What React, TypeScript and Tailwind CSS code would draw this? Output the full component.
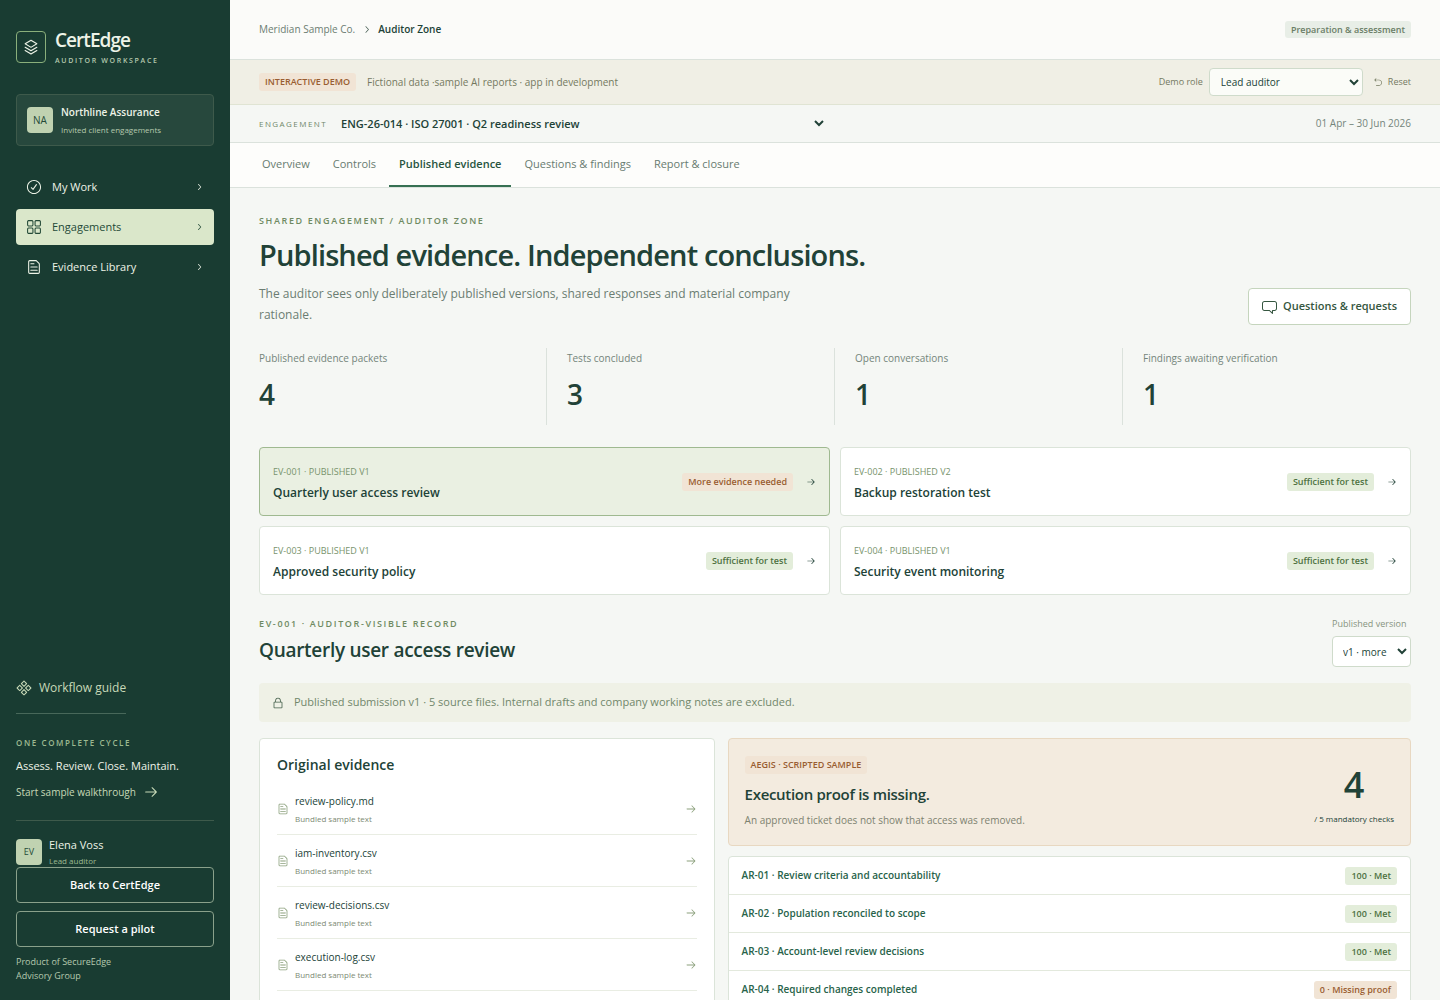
import {
  RxArrowRight,
  RxChatBubble,
  RxCheckCircled,
  RxChevronRight,
  RxComponent1,
  RxDashboard,
  RxFileText,
  RxLayers,
  RxLockClosed,
  RxReset,
} from "react-icons/rx";

const navItems = [
  { label: "My Work", icon: RxCheckCircled, active: false },
  { label: "Engagements", icon: RxDashboard, active: true },
  { label: "Evidence Library", icon: RxFileText, active: false },
];

const tabs = ["Overview", "Controls", "Published evidence", "Questions & findings", "Report & closure"];

const stats = [
  { label: "Published evidence packets", value: 4 },
  { label: "Tests concluded", value: 3 },
  { label: "Open conversations", value: 1 },
  { label: "Findings awaiting verification", value: 1 },
];

const packets = [
  { id: "EV-001", version: "V1", title: "Quarterly user access review", status: "More evidence needed", ok: false },
  { id: "EV-002", version: "V2", title: "Backup restoration test", status: "Sufficient for test", ok: true },
  { id: "EV-003", version: "V1", title: "Approved security policy", status: "Sufficient for test", ok: true },
  { id: "EV-004", version: "V1", title: "Security event monitoring", status: "Sufficient for test", ok: true },
];

const files = ["review-policy.md", "iam-inventory.csv", "review-decisions.csv", "execution-log.csv"];

const checks = [
  { label: "AR-01 · Review criteria and accountability", status: "100 · Met", ok: true },
  { label: "AR-02 · Population reconciled to scope", status: "100 · Met", ok: true },
  { label: "AR-03 · Account-level review decisions", status: "100 · Met", ok: true },
  { label: "AR-04 · Required changes completed", status: "0 · Missing proof", ok: false },
];

function Badge({ ok, children }: { ok: boolean; children: React.ReactNode }) {
  return (
    <span
      className={`inline-block shrink-0 whitespace-nowrap rounded-[3px] px-1.5 text-[9px] leading-[18px] font-semibold ${
        ok ? "bg-[#e3edda] text-[#4d713f]" : "bg-[#f1e4d5] text-[#995d31]"
      }`}
    >
      {children}
    </span>
  );
}

function Sidebar() {
  return (
    <aside className="sticky top-0 h-screen w-[230px] shrink-0 flex flex-col bg-[#193c32] px-4 pt-7 pb-[17px] text-[#edf3e7]">
      {/* Brand */}
      <div className="flex items-center gap-[9px]">
        <div className="flex h-8 w-[30px] items-center justify-center rounded border border-[#8aaf7b]">
          <RxLayers className="h-4 w-4" />
        </div>
        <div>
          <div className="text-[19px] leading-6 font-semibold tracking-[-0.05em]">CertEdge</div>
          <div className="mt-1 text-[7px] leading-[10px] font-semibold tracking-[0.24em] text-[#b5c9ae]">AUDITOR WORKSPACE</div>
        </div>
      </div>

      {/* Workspace */}
      <div className="mt-7 flex h-[52px] shrink-0 items-center gap-2 rounded border border-[#3e5a4b] bg-[#27483d] px-2.5">
        <div className="flex h-[26px] w-[26px] items-center justify-center rounded bg-[#c0d2b1] text-[10px] text-[#244a38]">NA</div>
        <div>
          <div className="text-[10px] leading-4 font-semibold">Northline Assurance</div>
          <div className="mt-1 text-[8px] leading-3 text-[#b5c9ae]">Invited client engagements</div>
        </div>
      </div>

      <nav className="mt-[23px] flex flex-col gap-1">
        {navItems.map(({ label, icon: Icon, active }) => (
          <a
            key={label}
            href="#"
            className={`flex h-9 items-center gap-2.5 rounded px-2.5 text-[11px] ${
              active ? "bg-[#dae7ca] text-[#244a38]" : "font-medium text-[#edf3e7]"
            }`}
          >
            <Icon className="h-4 w-4" />
            <span className="flex-1">{label}</span>
            <RxChevronRight className="h-[10px] w-[10px]" />
          </a>
        ))}
      </nav>

      <div className="mt-auto">
        <a href="#" className="inline-flex items-center gap-[7px] border-b border-[#48685a] pb-[17px] text-xs text-[#c7d9b7]">
          <RxComponent1 className="h-4 w-4" />
          Workflow guide
        </a>
        <div className="mt-[23px] text-[8px] leading-3 font-semibold tracking-[0.2em] text-[#9db991]">ONE COMPLETE CYCLE</div>
        <div className="mt-[9px] text-[11px] leading-4">Assess. Review. Close. Maintain.</div>
        <a href="#" className="mt-2.5 flex items-center gap-[7px] text-[10px] leading-4 text-[#c7d9b7]">
          Start sample walkthrough
          <RxArrowRight className="h-4 w-4" />
        </a>
      </div>

      {/* Signed-in user */}
      <div className="mt-5 flex items-center gap-[7px] border-t border-[#3e5a4b] pt-4">
        <div className="flex h-[26px] w-[26px] items-center justify-center rounded bg-[#c0d2b1] text-[9px] text-[#244a38]">EV</div>
        <div>
          <div className="text-[11px] leading-4">Elena Voss</div>
          <div className="mt-0.5 text-[8px] leading-3 text-[#9db991]">Lead auditor</div>
        </div>
      </div>
      <a href="#" className="flex h-9 shrink-0 items-center justify-center rounded border border-[#8aa18b] text-[11px] font-semibold text-white">
        Back to CertEdge
      </a>
      <a href="#" className="mt-2 flex h-9 shrink-0 items-center justify-center rounded border border-[#8aa18b] text-[11px] font-semibold text-white">
        Request a pilot
      </a>
      <p className="mt-2 text-[9px] leading-[14px] text-[#b5c9ae]">
        Product of SecureEdge
        <br />
        Advisory Group
      </p>
    </aside>
  );
}

function TopBars() {
  return (
    <>
      <header className="flex h-[60px] items-center justify-between border-b border-[#dbe2dc] bg-[#fbfbf9] px-[29px] text-[10px]">
        <div className="flex items-center gap-1.5">
          <a href="#" className="text-[#6b7d72]">Meridian Sample Co.</a>
          <RxChevronRight className="h-[11px] w-[11px] text-[#4a6156]" />
          <span className="font-semibold text-[#214237]">Auditor Zone</span>
        </div>
        <span className="rounded-[3px] bg-[#e8eee7] px-1.5 text-[9px] leading-[17px] font-semibold text-[#6a7d66]">Preparation &amp; assessment</span>
      </header>

      {/* Demo notice */}
      <div className="flex h-[45px] items-center border-b border-[#e0e4d3] bg-[#f0efe5] px-[29px] text-[10px] text-[#74795f]">
        <Badge ok={false}>INTERACTIVE DEMO</Badge>
        <span className="ml-[11px] flex-1">Fictional data ·sample AI reports · app in development</span>
        <label htmlFor="role" className="text-[9px]">Demo role</label>
        <select id="role" className="ml-1.5 h-7 w-[154px] rounded border border-[#cfdbcb] bg-[#fbfcf8] pl-[7px] text-[10px] text-[#214237]">
          <option>Lead auditor</option>
        </select>
        <button className="ml-2.5 flex items-center gap-[5px] text-[9px]">
          <RxReset className="h-2.5 w-2.5" />
          Reset
        </button>
      </div>

      <div className="flex h-[38px] items-center border-b border-[#dbe2dc] px-[29px]">
        <label htmlFor="engagement" className="text-[8px] tracking-[0.18em] text-[#71876b]">ENGAGEMENT</label>
        <select id="engagement" className="ml-2.5 w-[490px] bg-transparent text-[11px] font-semibold text-[#214237]">
          <option>ENG-26-014 · ISO 27001 · Q2 readiness review</option>
        </select>
        <span className="ml-auto text-[10px] text-[#74857b]">01 Apr – 30 Jun 2026</span>
      </div>

      <nav className="flex h-[45px] items-stretch gap-[3px] border-b border-[#dbe2dc] bg-[#fdfdfb] px-[22px] text-[11px]">
        {tabs.map((tab, i) => (
          <a
            key={tab}
            href="#"
            className={`flex items-center border-b-2 px-2.5 ${
              i === 2 ? "border-[#367052] font-semibold text-[#28543f]" : "border-transparent text-[#687b70]"
            }`}
          >
            {tab}
          </a>
        ))}
      </nav>
    </>
  );
}

function EvidenceFiles() {
  return (
    <section className="min-w-0 rounded border border-[#dbe4d9] bg-white px-[17px] pt-4 pb-8">
      <h3 className="text-sm leading-5 font-semibold">Original evidence</h3>
      <ul className="mt-2">
        {files.map((file) => (
          <li key={file} className="border-b border-[#e9ede3]">
            <a href="#" className="flex h-[51px] items-center gap-1.5">
              <RxFileText className="h-3 w-3 text-[#8ba07c]" />
              <span className="flex-1">
                <span className="block text-[10px] leading-4">{file}</span>
                <span className="mt-1 block text-[8px] leading-3 text-[#7c8a74]">Bundled sample text</span>
              </span>
              <RxArrowRight className="h-3 w-3 text-[#8ba07c]" />
            </a>
          </li>
        ))}
      </ul>
    </section>
  );
}

function Assessment() {
  return (
    <div className="flex min-w-0 flex-col gap-2.5">
      <section className="flex h-[108px] shrink-0 items-center justify-between rounded border border-[#e8d8c1] bg-[#f3ebdf] px-4">
        <div className="flex flex-col items-start">
          <Badge ok={false}>AEGIS · SCRIPTED SAMPLE</Badge>
          <h3 className="mt-2.5 text-[15px] leading-5 font-semibold tracking-[-0.02em]">Execution proof is missing.</h3>
          <p className="mt-2 text-[10px] leading-4 text-[#7d8270]">An approved ticket does not show that access was removed.</p>
        </div>
        <div className="pt-1.5 text-center">
          <div className="text-[36px] leading-10 font-semibold">4</div>
          <div className="mt-2 text-[8px] leading-3">/ 5 mandatory checks</div>
        </div>
      </section>
      <ul className="rounded border border-[#dbe4d9] bg-white">
        {checks.map((check) => (
          <li key={check.label} className="flex h-[38px] items-center justify-between border-b border-[#e3e9dd] px-[13px] text-[10px] font-semibold text-[#28634a]">
            {check.label}
            <Badge ok={check.ok}>{check.status}</Badge>
          </li>
        ))}
      </ul>
    </div>
  );
}

export default function App() {
  return (
    <div className="flex h-screen overflow-hidden bg-[#f5f7f4] font-['Open_Sans',sans-serif] text-[#214237]">
      <Sidebar />
      <div className="min-w-0 flex-1">
        <TopBars />
        <main className="px-[29px] pt-[27px]">
          <div className="text-[9px] leading-3 font-semibold tracking-[0.18em] text-[#6f8a62]">SHARED ENGAGEMENT / AUDITOR ZONE</div>
          <div className="flex items-end justify-between">
            <div>
              <h1 className="mt-2 text-[29px] leading-10 font-semibold tracking-[-0.03em]">Published evidence. Independent conclusions.</h1>
              <p className="mt-2 max-w-[560px] text-xs leading-[21px] text-[#6b7d72]">
                The auditor sees only deliberately published versions, shared responses and material company rationale.
              </p>
            </div>
            <button className="flex h-[37px] items-center gap-1.5 rounded border border-[#c5d5bd] bg-white px-[13px] text-[11px] font-semibold text-[#355640]">
              <RxChatBubble className="h-[15px] w-[15px]" />
              Questions &amp; requests
            </button>
          </div>

          {/* Headline numbers */}
          <dl className="mt-[23px] grid grid-cols-4">
            {stats.map((stat) => (
              <div key={stat.label} className="h-[77px] border-r border-[#dbe2dc] pl-5 first:pl-0 last:border-r-0">
                <dt className="pt-0.5 text-[10px] leading-4 text-[#74857b]">{stat.label}</dt>
                <dd className="mt-2.5 text-[28px] leading-9 font-semibold">{stat.value}</dd>
              </div>
            ))}
          </dl>

          <div className="mt-[22px] grid grid-cols-2 gap-2.5">
            {packets.map((packet, i) => (
              <button
                key={packet.id}
                className={`flex h-[69px] items-center rounded border px-[13px] text-left ${
                  i === 0 ? "border-[#9fb990] bg-[#eaf0e2]" : "border-[#dbe4d9] bg-white"
                }`}
              >
                <span className="flex-1">
                  <span className="block pt-1 text-[9px] leading-3 text-[#78936c]">
                    {packet.id} · PUBLISHED {packet.version}
                  </span>
                  <span className="mt-1.5 block text-xs leading-[18px] font-semibold">{packet.title}</span>
                </span>
                <Badge ok={packet.ok}>{packet.status}</Badge>
                <RxArrowRight className="ml-[13px] h-2.5 w-2.5" />
              </button>
            ))}
          </div>

          {/* Selected record */}
          <div className="mt-[23px] flex items-start justify-between">
            <div>
              <div className="text-[9px] leading-3 font-semibold tracking-[0.18em] text-[#6f8a62]">EV-001 · AUDITOR-VISIBLE RECORD</div>
              <h2 className="mt-1.5 text-[19px] leading-7 font-semibold tracking-[-0.015em]">Quarterly user access review</h2>
            </div>
            <div className="flex w-[79px] flex-col gap-1.5">
              <label htmlFor="version" className="text-[9px] leading-3 text-[#87947f]">Published version</label>
              <select id="version" className="h-[31px] rounded border border-[#cfdbcb] bg-white pl-1.5 text-[10px]">
                <option>v1 · more</option>
              </select>
            </div>
          </div>

          <div className="mt-4 flex h-[39px] items-center gap-2.5 rounded bg-[#eff1e6] px-[13px] text-[11px] text-[#71876b]">
            <RxLockClosed className="h-3 w-3 text-[#45604b]" />
            Published submission v1 · 5 source files. Internal drafts and company working notes are excluded.
          </div>

          <div className="mt-4 grid grid-cols-[2fr_3fr] gap-[13px]">
            <EvidenceFiles />
            <Assessment />
          </div>
        </main>
      </div>
    </div>
  );
}
